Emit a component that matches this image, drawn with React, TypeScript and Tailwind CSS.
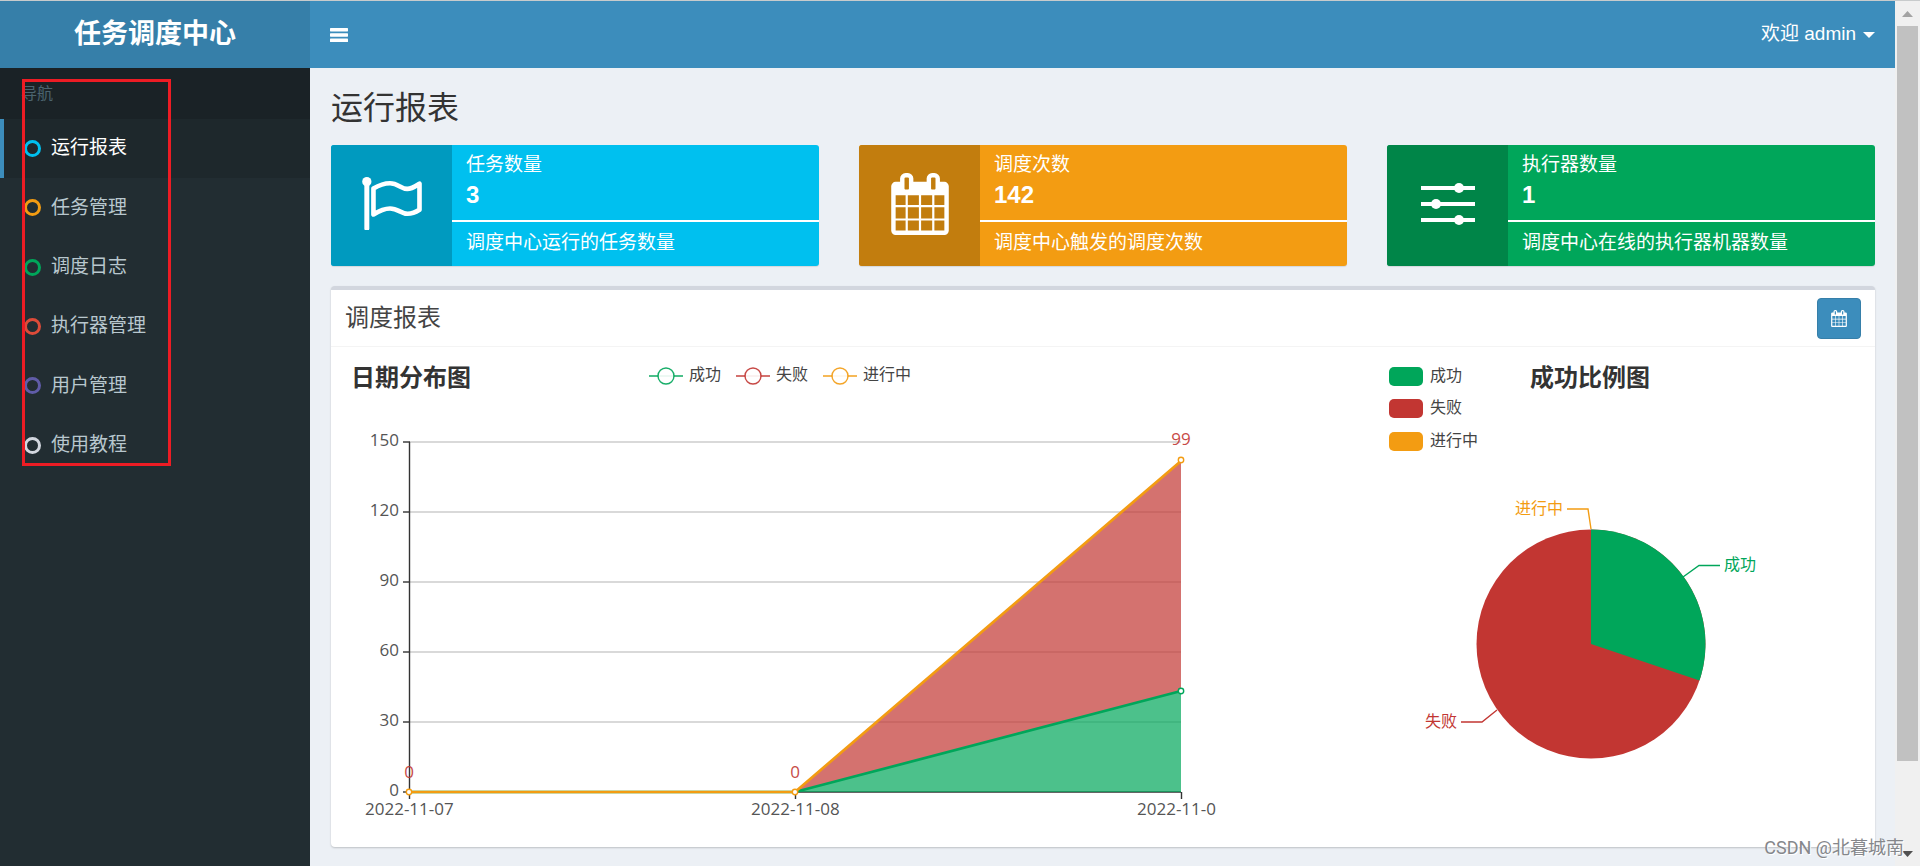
import type { ReactNode } from "react";

const FONT = "font-['Liberation_Sans','Noto_Sans_CJK_SC',sans-serif]";
const CHART_FONT = "font-['Open_Sans','Noto_Sans_CJK_SC',sans-serif]";

const GREEN = "#00a65a";
const RED = "#c23632";
const ORANGE = "#f39c12";

const menu = [
  { label: "运行报表", color: "text-[#00c0ef]", active: true },
  { label: "任务管理", color: "text-[#f39c12]" },
  { label: "调度日志", color: "text-[#00a65a]" },
  { label: "执行器管理", color: "text-[#dd4b39]" },
  { label: "用户管理", color: "text-[#605ca8]" },
  { label: "使用教程", color: "text-[#d2d6de]" },
];

const BarsIcon = () => (
  <svg width="18" height="14" viewBox="0 0 18 14" fill="currentColor">
    <rect width="18" height="3.4" rx="0.6" />
    <rect y="5.3" width="18" height="3.4" rx="0.6" />
    <rect y="10.6" width="18" height="3.4" rx="0.6" />
  </svg>
);

const CalendarIcon = ({ className }: { className: string }) => (
  <svg className={className} viewBox="64 0 1664 1792" fill="currentColor" fillRule="evenodd">
    <path d="M192 1664h288v-288h-288v288zM544 1664h320v-288h-320v288zM192 1312h288v-320h-288v320zM544 1312h320v-320h-320v320zM192 928h288v-288h-288v288zM928 1664h320v-288h-320v288zM544 928h320v-288h-320v288zM1312 1664h288v-288h-288v288zM928 1312h320v-320h-320v320zM576 448v-288q0-13-9.5-22.5t-22.5-9.5h-64q-13 0-22.5 9.5t-9.5 22.5v288q0 13 9.5 22.5t22.5 9.5h64q13 0 22.5-9.5t9.5-22.5zM1312 1312h288v-320h-288v320zM928 928h320v-288h-320v288zM1312 928h288v-288h-288v288zM1344 448v-288q0-13-9.5-22.5t-22.5-9.5h-64q-13 0-22.5 9.5t-9.5 22.5v288q0 13 9.5 22.5t22.5 9.5h64q13 0 22.5-9.5t9.5-22.5zM1728 384v1280q0 52-38 90t-90 38h-1408q-52 0-90-38t-38-90v-1280q0-52 38-90t90-38h128v-96q0-66 47-113t113-47h64q66 0 113 47t47 113v96h384v-96q0-66 47-113t113-47h64q66 0 113 47t47 113v96h128q52 0 90 38t38 90z" />
  </svg>
);

const FlagIcon = () => (
  <svg width="60" height="53" viewBox="0 0 180 160" fill="none" stroke="currentColor">
    <circle cx="14" cy="14" r="14" fill="currentColor" stroke="none" />
    <path d="M14 14V155" strokeWidth="15" strokeLinecap="round" />
    <path
      d="M34 35C52 24 68 19 84 19C108 19 118 36 136 36C150 36 162 27 173 20V99C162 106 150 111 137 111C118 111 108 95 84 95C66 95 50 103 34 113Z"
      strokeWidth="14"
      strokeLinejoin="round"
    />
  </svg>
);

const SlidersIcon = () => (
  <svg width="54" height="44" viewBox="0 0 54 44" fill="currentColor">
    <rect y="4" width="54" height="4" />
    <rect y="20" width="54" height="4" />
    <rect y="36" width="54" height="4" />
    <circle cx="38" cy="6" r="5" />
    <circle cx="15" cy="22" r="5" />
    <circle cx="38" cy="38" r="5" />
  </svg>
);

type InfoBoxProps = {
  title: string;
  value: string;
  desc: string;
  bg: string;
  iconBg: string;
  children: ReactNode;
};

const InfoBox = ({ title, value, desc, bg, iconBg, children }: InfoBoxProps) => (
  <div className={`flex h-[121px] overflow-hidden rounded-[3px] text-white shadow-[0_1px_1px_rgba(0,0,0,0.1)] ${bg}`}>
    <div className={`flex w-[121px] shrink-0 items-center justify-center pb-1 ${iconBg}`}>{children}</div>
    <div className="min-w-0 flex-1 pt-2">
      <div className="truncate px-[14px] text-[19px] leading-6">{title}</div>
      <div className="px-[14px] text-2xl leading-9 font-bold">{value}</div>
      <div className="mt-[7px] h-0.5 bg-white" />
      <div className="mt-[9px] truncate px-[14px] text-[19px] leading-6">{desc}</div>
    </div>
  </div>
);

const yTicks = [150, 120, 90, 60, 30, 0];
const yPos = (v: number) => 445 - Math.round((v * 350) / 150);

const LineChart = () => (
  <svg viewBox="0 0 1008 500" className={`block h-auto w-full ${CHART_FONT}`}>
    <text x="4" y="39" fontSize="24" fontWeight="700" fill="#333">日期分布图</text>

    {[
      { x: 302, label: "成功", color: GREEN },
      { x: 389, label: "失败", color: RED },
      { x: 476, label: "进行中", color: ORANGE },
    ].map((item) => (
      <g key={item.label}>
        <path d={`M${item.x} 29h34`} stroke={item.color} strokeWidth="2" opacity="0.7" />
        <circle cx={item.x + 17} cy="29" r="8" fill="#fff" stroke={item.color} strokeWidth="1.4" opacity="0.9" />
        <text x={item.x + 40} y="33" fontSize="16" fill="#444">{item.label}</text>
      </g>
    ))}

    {/* grid and y axis */}
    {yTicks.map((v) => (
      <g key={v}>
        {v > 0 && <path d={`M62 ${yPos(v)}H834`} stroke="#ccc" strokeWidth="1.4" />}
        <path d={`M56 ${yPos(v)}h7`} stroke="#333" strokeWidth="1.4" />
        <text x="52" y={yPos(v) + 4} fontSize="17" textAnchor="end" fill="#555">{v}</text>
      </g>
    ))}
    <path d="M62.5 95V452M62 445H834M448.5 445v7M834.5 445v7" stroke="#333" strokeWidth="1.4" fill="none" />

    {/* stacked areas */}
    <path d="M448 445L834 344V445Z" fill={GREEN} opacity="0.7" />
    <path d="M448 445L834 114V344Z" fill={RED} opacity="0.7" />
    <path d="M62 445H448L834 344" fill="none" stroke={GREEN} strokeWidth="2.7" />
    <path d="M62 445H448L834 114" fill="none" stroke={ORANGE} strokeWidth="2.7" />
    <g fill="#fff" strokeWidth="1.4">
      <circle cx="834" cy="344" r="2.7" stroke={GREEN} />
      <circle cx="62" cy="445" r="2.7" stroke={ORANGE} />
      <circle cx="448" cy="445" r="2.7" stroke={ORANGE} />
      <circle cx="834" cy="113" r="2.7" stroke={ORANGE} />
    </g>

    <g fontSize="17" textAnchor="middle" fill={RED} opacity="0.9">
      <text x="62" y="431">0</text>
      <text x="448" y="431">0</text>
      <text x="834" y="98">99</text>
    </g>
    <g fontSize="17" fill="#555">
      <text x="18" y="468">2022-11-07</text>
      <text x="404" y="468">2022-11-08</text>
      <text x="790" y="468">2022-11-0</text>
    </g>
  </svg>
);

const PieChart = () => (
  <svg viewBox="0 0 504 500" className={`block h-auto w-full ${CHART_FONT}`}>
    {[
      { y: 20, label: "成功", color: GREEN },
      { y: 52, label: "失败", color: RED },
      { y: 85, label: "进行中", color: ORANGE },
    ].map((item) => (
      <g key={item.label}>
        <rect x="34" y={item.y} width="34" height="19" rx="5" fill={item.color} />
        <text x="75" y={item.y + 14} fontSize="16" fill="#444">{item.label}</text>
      </g>
    ))}
    <text x="175" y="39" fontSize="24" fontWeight="700" fill="#333">成功比例图</text>

    <circle cx="236" cy="297" r="114.5" fill={RED} />
    <path d="M236 297V182.5A114.5 114.5 0 0 1 344.5 333.5Z" fill={GREEN} />

    <g fill="none" strokeWidth="1.4">
      <path d="M328 230L344 218.5H365" stroke={GREEN} />
      <path d="M142 363L127 375H106" stroke={RED} />
      <path d="M236 182L233 162H212" stroke={ORANGE} />
    </g>
    <g fontSize="16">
      <text x="369" y="223" fill={GREEN}>成功</text>
      <text x="70" y="380" fill={RED}>失败</text>
      <text x="160" y="167" fill={ORANGE}>进行中</text>
    </g>
  </svg>
);

const Sidebar = () => (
  <aside className="relative w-[310px] shrink-0 bg-[#222d32]">
    <a href="#" className="flex h-[67px] items-center justify-center bg-[#367fa9] text-[27px] font-bold text-white">
      任务调度中心
    </a>
    <div className="h-[51px] bg-[#1a2226] pl-[21px] text-base leading-[51px] text-[#4b646f]">导航</div>
    <nav>
      <ul className="grid h-[356px] grid-rows-6">
        {menu.map((item) => (
          <li key={item.label} className="flex">
            <a
              href="#"
              className={`flex flex-1 items-center gap-[10px] border-l-4 pl-5 text-[19px] ${
                item.active ? "border-[#3c8dbc] bg-[#1e282c] text-white" : "border-transparent text-[#b8c7ce]"
              }`}
            >
              <span className={`size-[17px] rounded-full border-3 border-current ${item.color}`} />
              {item.label}
            </a>
          </li>
        ))}
      </ul>
    </nav>
    {/* highlight frame around the menu */}
    <div className="pointer-events-none absolute top-[78px] left-[22px] h-[387px] w-[149px] border-3 border-[#ed1c24]" />
  </aside>
);

const Scrollbar = () => (
  <div className="flex w-[25px] shrink-0 flex-col items-center bg-[#f0f0f0]">
    <svg width="25" height="25" viewBox="0 0 25 25">
      <path d="M7 16L12.5 10L18 16Z" fill="#a3a3a3" />
    </svg>
    <div className="h-[735px] w-[21px] bg-[#c1c1c1]" />
    <svg className="mt-auto" width="25" height="25" viewBox="0 0 25 25">
      <path d="M7 10L12.5 16L18 10Z" fill="#505050" />
    </svg>
  </div>
);

export default function App() {
  return (
    <div lang="zh-CN" className={`relative flex min-h-screen border-t border-[#c8cbcc] bg-[#ecf0f5] ${FONT}`}>
      <Sidebar />

      <div className="min-w-0 flex-1">
        <header className="flex h-[67px] items-center justify-between bg-[#3c8dbc] px-5 text-white">
          <button type="button" aria-label="Toggle navigation">
            <BarsIcon />
          </button>
          <button type="button" className="flex items-center gap-[7px] text-[19px]">
            欢迎 admin
            <span className="border-x-[6px] border-t-[6px] border-x-transparent border-t-white" />
          </button>
        </header>

        <main className="pt-5 pr-5 pl-[21px]">
          <h1 className="mb-[17px] text-[32px] leading-10 text-[#333]">运行报表</h1>

          <div className="grid grid-cols-3 gap-10">
            <InfoBox title="任务数量" value="3" desc="调度中心运行的任务数量" bg="bg-[#00c0ef]" iconBg="bg-[#009abf]">
              <FlagIcon />
            </InfoBox>
            <InfoBox title="调度次数" value="142" desc="调度中心触发的调度次数" bg="bg-[#f39c12]" iconBg="bg-[#c27d0e]">
              <CalendarIcon className="h-[62px] w-[58px]" />
            </InfoBox>
            <InfoBox title="执行器数量" value="1" desc="调度中心在线的执行器机器数量" bg="bg-[#00a65a]" iconBg="bg-[#008548]">
              <SlidersIcon />
            </InfoBox>
          </div>

          <section className="mt-5 rounded-[4px] border-t-4 border-[#d2d6de] bg-white shadow-[0_1px_2px_rgba(0,0,0,0.2)]">
            <div className="flex h-[57px] items-center justify-between border-b border-[#f4f4f4] px-[14px]">
              <h2 className="text-2xl text-[#444]">调度报表</h2>
              <button
                type="button"
                aria-label="选择日期"
                className="flex h-[41px] w-11 items-center justify-center rounded-[4px] border border-[#367fa9] bg-[#3c8dbc] text-white"
              >
                <CalendarIcon className="h-[17px] w-4" />
              </button>
            </div>
            <div className="grid grid-cols-3 px-4">
              <div className="col-span-2">
                <LineChart />
              </div>
              <PieChart />
            </div>
          </section>
        </main>
      </div>

      <Scrollbar />

      <div className="pointer-events-none absolute right-4 bottom-1 font-['Roboto','Noto_Sans_CJK_SC',sans-serif] text-lg text-[#85878b] [text-shadow:1px_1px_0_#fff]">
        CSDN @北暮城南
      </div>
    </div>
  );
}
